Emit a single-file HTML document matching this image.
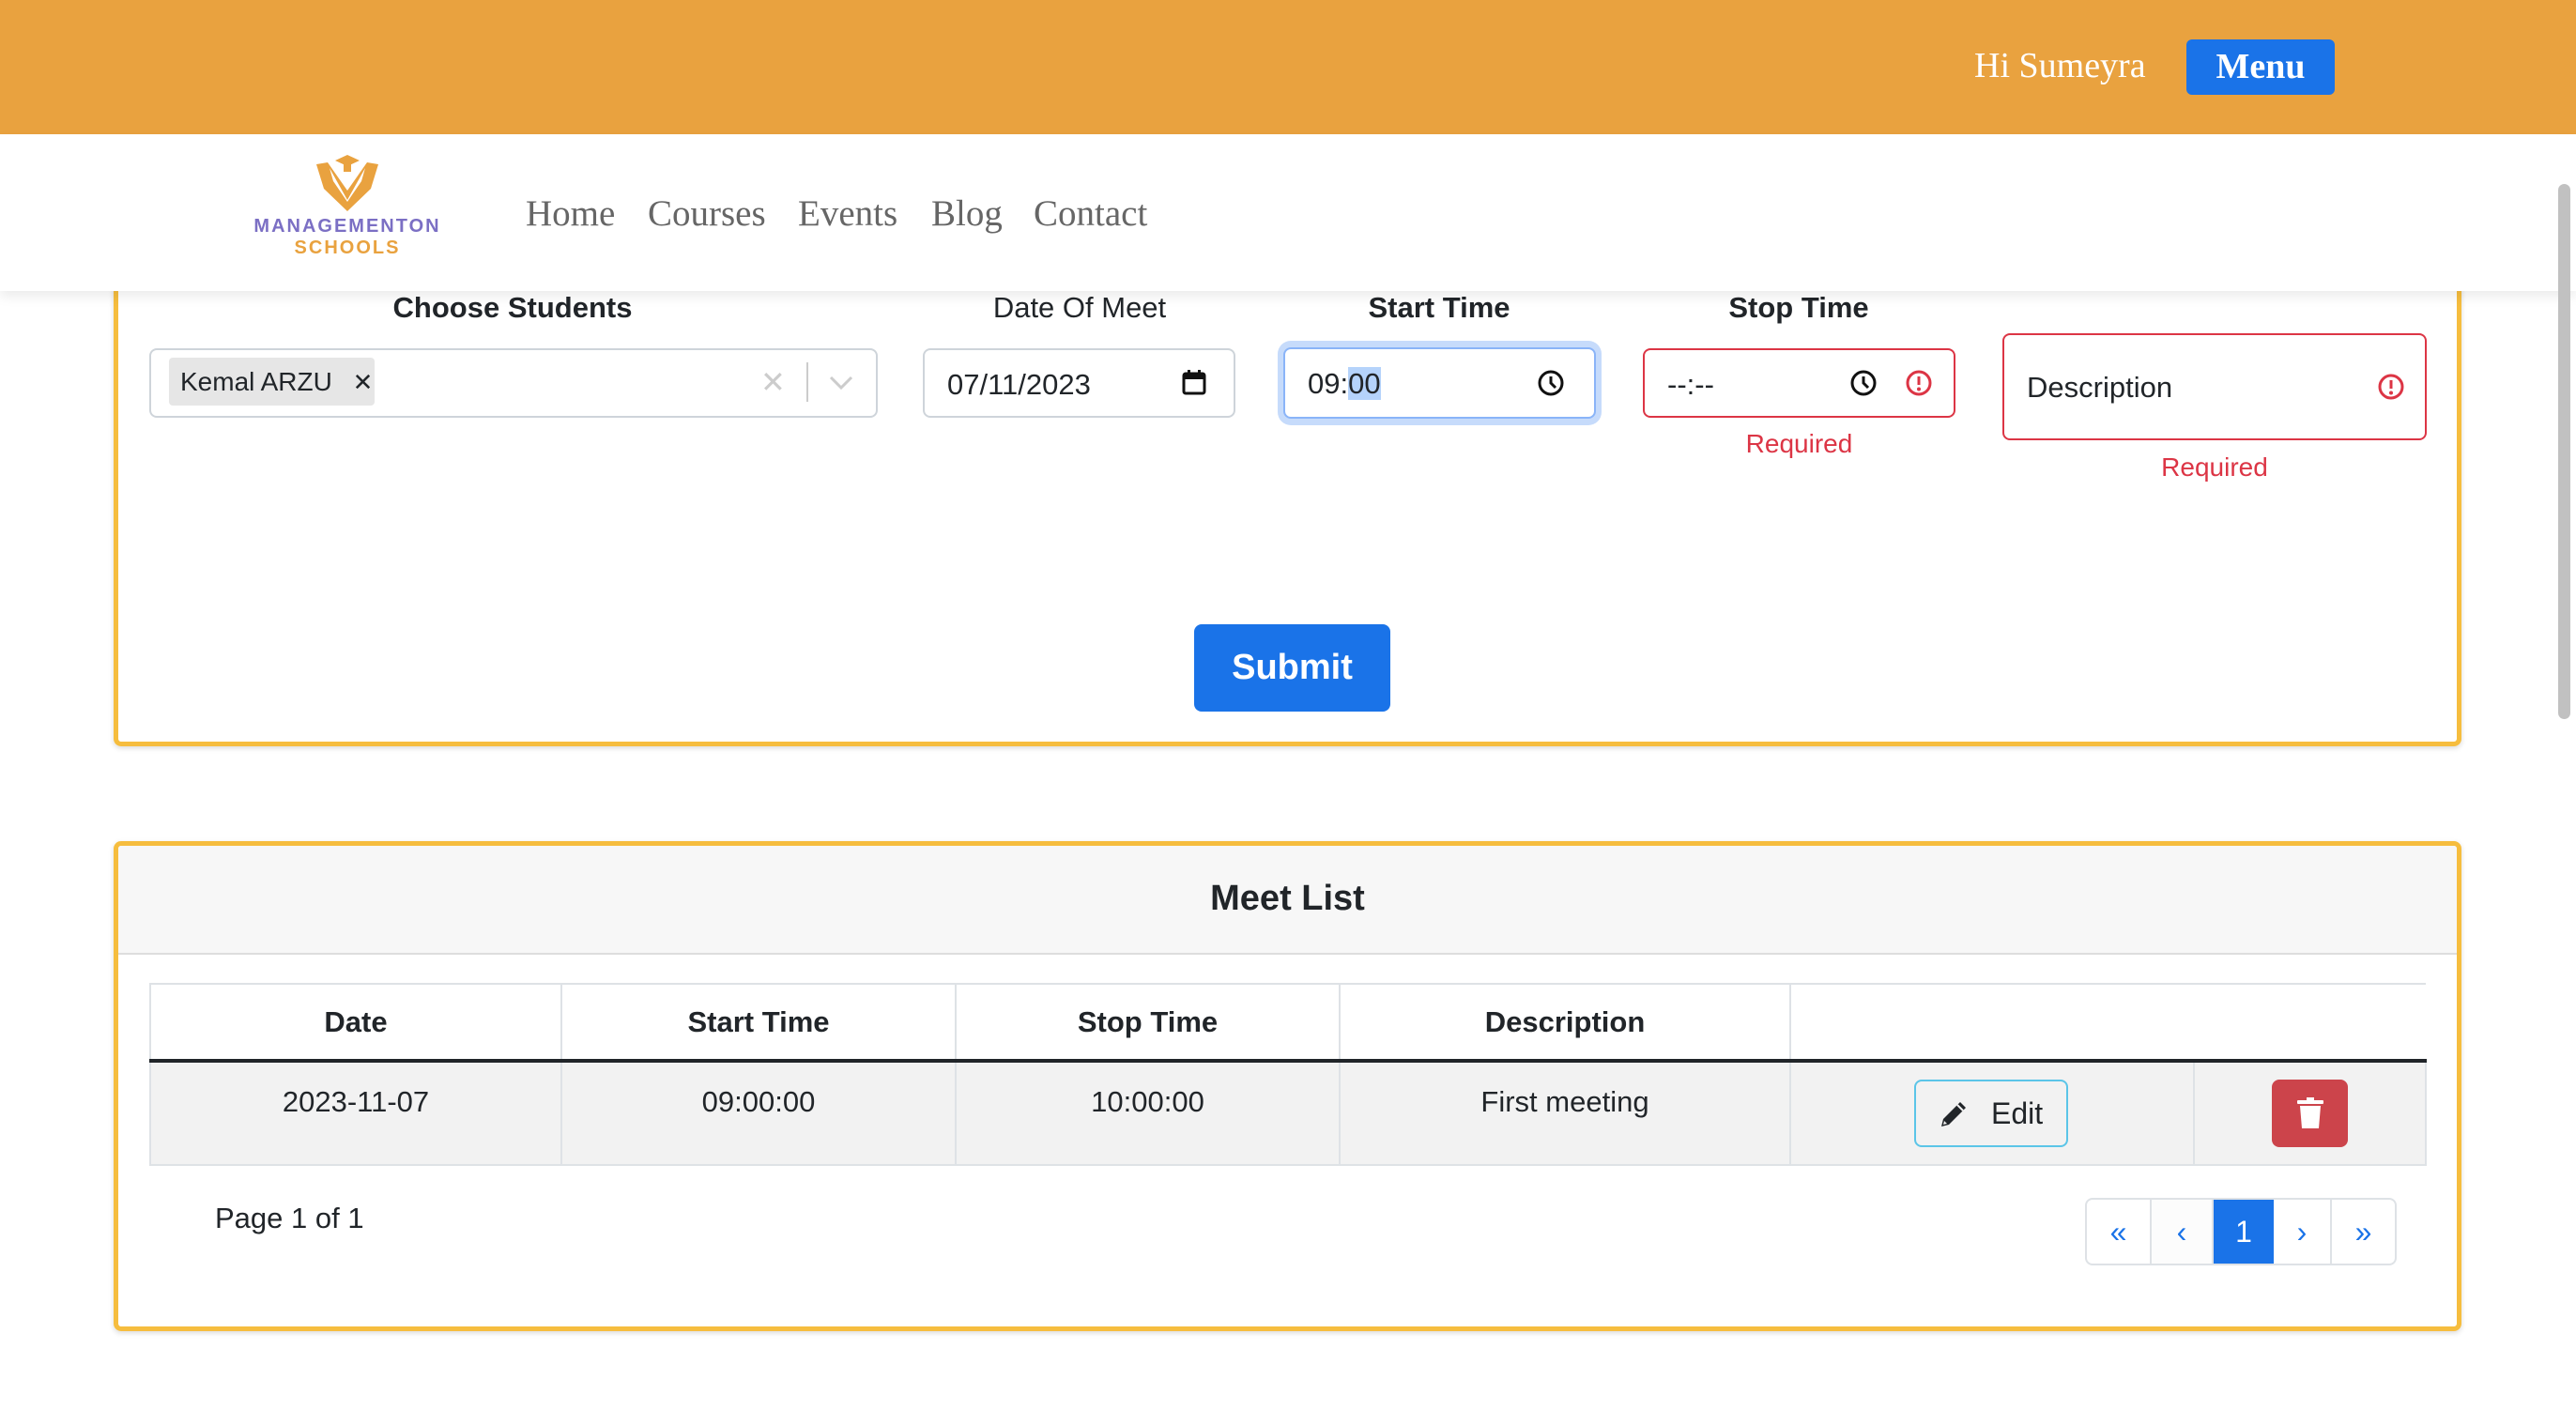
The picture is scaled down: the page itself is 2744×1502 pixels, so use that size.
<!DOCTYPE html>
<html><head><meta charset="utf-8"><style>
*{box-sizing:border-box;margin:0;padding:0}
body{width:2744px;height:1502px;background:#fff;font-family:"Liberation Sans",sans-serif;color:#212529;position:relative;overflow:hidden}
.a{position:absolute}
.top{left:0;top:0;width:2744px;height:143px;background:#E9A23F}
.serif{font-family:"Liberation Serif",serif}
.nav{left:0;top:143px;width:2744px;height:167px;background:#fff;box-shadow:0 6px 12px rgba(0,0,0,.08);z-index:5}
.lab{font-size:31px;text-align:center;top:310px}
.inp{border:2px solid #ced4da;border-radius:8px;background:#fff;font-size:31px}
.req{color:#dc3545;font-size:28px;text-align:center}
.card{border:5px solid #F6BD3E;border-radius:8px;box-shadow:0 2px 6px rgba(0,0,0,.15)}
td,th{font-size:31px;text-align:center}
</style></head><body>
<div class="a top"></div>
<div class="a serif" style="left:2103px;top:48px;font-size:38px;color:#fff">Hi Sumeyra</div>
<div class="a serif" style="left:2329px;top:42px;width:158px;height:59px;background:#1a73e8;border-radius:6px;color:#fff;font-weight:bold;font-size:38px;text-align:center;line-height:59px">Menu</div>

<!-- form card -->
<div class="a card" style="left:121px;top:250px;width:2501px;height:545px;border-top:none;border-radius:0 0 8px 8px"></div>

<div class="a nav">
 <svg class="a" style="left:335px;top:20px" width="70" height="62" viewBox="0 0 70 62">
  <path d="M35 2 L48 8 L35 14 L22 8Z" fill="#E9A23F"/><rect x="31" y="12" width="8" height="8" fill="#E9A23F"/>
  <path d="M2 12 L14 10 L35 40 L56 10 L68 12 L60 38 L35 62 L10 38Z" fill="#E9A23F"/>
  <path d="M16 16 L35 50 L54 16 L50 30 L35 52 L20 30Z" fill="#fff"/>
 </svg>
 <div class="a" style="left:268px;top:87px;width:204px;text-align:center;font-size:20px;letter-spacing:2px;color:#7b6fc4;font-weight:bold">MANAGEMENTON</div>
 <div class="a" style="left:268px;top:110px;width:204px;text-align:center;font-size:20px;letter-spacing:2px;color:#E9A23F;font-weight:bold">SCHOOLS</div>
 <div class="a serif" style="left:560px;top:62px;font-size:39px;color:#666;word-spacing:0">Home</div>
 <div class="a serif" style="left:690px;top:62px;font-size:39px;color:#666">Courses</div>
 <div class="a serif" style="left:850px;top:62px;font-size:39px;color:#666">Events</div>
 <div class="a serif" style="left:992px;top:62px;font-size:39px;color:#666">Blog</div>
 <div class="a serif" style="left:1101px;top:62px;font-size:39px;color:#666">Contact</div>
</div>
<div class="a" style="left:2725px;top:196px;width:13px;height:570px;background:#c1c1c1;border-radius:7px;z-index:6"></div>

<div class="a lab" style="left:346px;width:400px;font-weight:bold">Choose Students</div>
<div class="a inp" style="left:159px;top:371px;width:776px;height:74px"></div>
<div class="a" style="left:180px;top:381px;width:219px;height:51px;background:#e6e6e6;border-radius:4px;font-size:28px;line-height:51px;padding-left:12px">Kemal ARZU <span style="margin-left:14px;font-size:26px">✕</span></div>
<div class="a" style="left:810px;top:388px;font-size:32px;color:#ccc">✕</div>
<div class="a" style="left:859px;top:386px;width:2px;height:42px;background:#ccc"></div>
<svg class="a" style="left:883px;top:400px" width="26" height="16"><path d="M2 2 L13 13 L24 2" stroke="#ccc" stroke-width="3" fill="none"/></svg>

<div class="a lab" style="left:950px;width:400px">Date Of Meet</div>
<div class="a inp" style="left:983px;top:371px;width:333px;height:74px;padding:19px 24px">07/11/2023</div>
<svg class="a" style="left:1259px;top:393px" width="26" height="28"><rect x="2" y="5" width="22" height="21" rx="2" fill="none" stroke="#111" stroke-width="3"/><rect x="2" y="5" width="22" height="6" fill="#111"/><rect x="6" y="1" width="3" height="6" fill="#111"/><rect x="17" y="1" width="3" height="6" fill="#111"/></svg>

<div class="a lab" style="left:1333px;width:400px;font-weight:bold">Start Time</div>
<div class="a" style="left:1361px;top:363px;width:345px;height:90px;background:#c6dbfb;border-radius:14px"></div>
<div class="a inp" style="left:1367px;top:370px;width:333px;height:76px;border-color:#8ab4f8;padding:19px 24px">09:<span style="background:#b5d3fb">00</span></div>
<svg class="a" style="left:1637px;top:393px" width="30" height="30"><circle cx="15" cy="15" r="12" fill="none" stroke="#111" stroke-width="3"/><path d="M15 8 V15 L20 20" stroke="#111" stroke-width="3" fill="none"/></svg>

<div class="a lab" style="left:1716px;width:400px;font-weight:bold">Stop Time</div>
<div class="a inp" style="left:1750px;top:371px;width:333px;height:74px;border-color:#dc3545;padding:19px 24px">--:--</div>
<svg class="a" style="left:1970px;top:393px" width="30" height="30"><circle cx="15" cy="15" r="12" fill="none" stroke="#111" stroke-width="3"/><path d="M15 8 V15 L20 20" stroke="#111" stroke-width="3" fill="none"/></svg>
<svg class="a" style="left:2029px;top:393px" width="30" height="30"><circle cx="15" cy="15" r="12" fill="none" stroke="#dc3545" stroke-width="3"/><path d="M15 8 V17" stroke="#dc3545" stroke-width="3"/><circle cx="15" cy="21.5" r="2" fill="#dc3545"/></svg>
<div class="a req" style="left:1750px;top:457px;width:333px">Required</div>

<div class="a inp" style="left:2133px;top:355px;width:452px;height:114px;border-color:#dc3545;padding:38px 24px">Description</div>
<svg class="a" style="left:2532px;top:397px" width="30" height="30"><circle cx="15" cy="15" r="12" fill="none" stroke="#dc3545" stroke-width="3"/><path d="M15 8 V17" stroke="#dc3545" stroke-width="3"/><circle cx="15" cy="21.5" r="2" fill="#dc3545"/></svg>
<div class="a req" style="left:2133px;top:482px;width:452px">Required</div>

<div class="a" style="left:1272px;top:665px;width:209px;height:93px;background:#1a73e8;border-radius:8px;color:#fff;font-weight:bold;font-size:38px;text-align:center;line-height:93px">Submit</div>

<!-- list card -->
<div class="a card" style="left:121px;top:896px;width:2501px;height:522px;overflow:hidden">
 <div style="height:116px;background:#f7f7f7;border-bottom:2px solid #ddd;text-align:center;font-weight:bold;font-size:38px;line-height:112px">Meet List</div>
</div>
<table class="a" style="left:159px;top:1047px;width:2426px;border-collapse:collapse">
 <tr style="height:82px"><th style="width:438px;border:2px solid #dee2e6;border-bottom:4px solid #212529">Date</th><th style="width:420px;border:2px solid #dee2e6;border-bottom:4px solid #212529">Start Time</th><th style="width:409px;border:2px solid #dee2e6;border-bottom:4px solid #212529">Stop Time</th><th style="width:480px;border:2px solid #dee2e6;border-bottom:4px solid #212529">Description</th><th colspan="2" style="border-top:2px solid #dee2e6;border-bottom:4px solid #212529;border-right:none"></th></tr>
 <tr style="height:111px;background:#f2f2f2"><td style="border:2px solid #dee2e6;vertical-align:top;padding-top:24px">2023-11-07</td><td style="border:2px solid #dee2e6;vertical-align:top;padding-top:24px">09:00:00</td><td style="border:2px solid #dee2e6;vertical-align:top;padding-top:24px">10:00:00</td><td style="border:2px solid #dee2e6;vertical-align:top;padding-top:24px">First meeting</td><td style="width:430px;border:2px solid #dee2e6"></td><td style="border:2px solid #dee2e6"></td></tr>
</table>
<div class="a" style="left:2039px;top:1150px;width:164px;height:72px;border:2px solid #5bc5e8;border-radius:8px;font-size:32px;line-height:68px;padding-left:80px">Edit</div>
<svg class="a" style="left:2064px;top:1170px" width="34" height="34" viewBox="0 0 34 34"><path d="M4 30 L6 22 L24 4 L30 10 L12 28Z" fill="#212529"/><path d="M21 7 L27 13" stroke="#f2f2f2" stroke-width="2"/><path d="M6 28 L7 24 L10 27Z" fill="#f2f2f2"/></svg>
<div class="a" style="left:2420px;top:1150px;width:81px;height:72px;background:#cc444b;border-radius:8px"></div>
<svg class="a" style="left:2446px;top:1168px" width="30" height="36"><rect x="1" y="4" width="28" height="4" rx="1" fill="#fff"/><rect x="11" y="1" width="8" height="4" fill="#fff"/><path d="M4 10 H26 L24 34 H6Z" fill="#fff"/></svg>

<div class="a" style="left:229px;top:1280px;font-size:31px">Page 1 of 1</div>
<div class="a" style="left:2221px;top:1276px;width:332px;height:72px;border:2px solid #dee2e6;border-radius:8px;overflow:hidden;display:flex;font-size:32px;color:#1a73e8;text-align:center;line-height:68px">
 <div style="width:69px;border-right:2px solid #dee2e6">«</div>
 <div style="width:66px;border-right:2px solid #dee2e6;background:#fcfcfc">‹</div>
 <div style="width:64px;background:#1a73e8;color:#fff">1</div>
 <div style="width:62px;border-right:2px solid #dee2e6">›</div>
 <div style="flex:1">»</div>
</div>
</body></html>
